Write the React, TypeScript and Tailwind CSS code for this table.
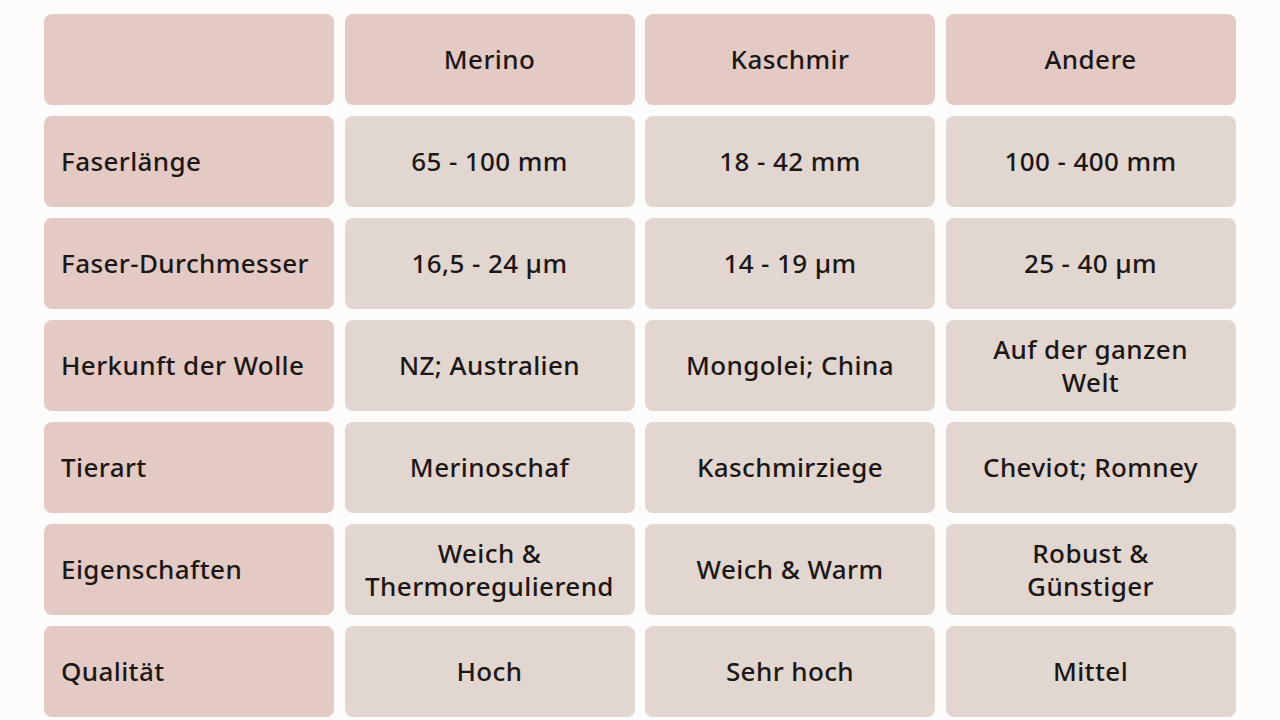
import React from "react";

const header = ["Merino", "Kaschmir", "Andere"];
const rows: { label: string; cells: string[][] }[] = [
  { label: "Faserlänge", cells: [["65 - 100 mm"], ["18 - 42 mm"], ["100 - 400 mm"]] },
  { label: "Faser-Durchmesser", cells: [["16,5 - 24 µm"], ["14 - 19 µm"], ["25 - 40 µm"]] },
  { label: "Herkunft der Wolle", cells: [["NZ; Australien"], ["Mongolei; China"], ["Auf der ganzen", "Welt"]] },
  { label: "Tierart", cells: [["Merinoschaf"], ["Kaschmirziege"], ["Cheviot; Romney"]] },
  { label: "Eigenschaften", cells: [["Weich &", "Thermoregulierend"], ["Weich & Warm"], ["Robust &", "Günstiger"]] },
  { label: "Qualität", cells: [["Hoch"], ["Sehr hoch"], ["Mittel"]] },
];

export default function App() {
  return (
    <div
      className="w-[1280px] h-[720px] bg-[#fdfcfb] px-[44px] pt-[14px] text-[#1c1715] overflow-hidden"
      style={{ fontFamily: '"Noto Sans", "Open Sans", sans-serif' }}
    >
      <div className="grid grid-cols-[290px_290px_290px_290px] auto-rows-[91px] gap-y-[11px] gap-x-[10.5px]">
        <div className="rounded-lg bg-[#e4cac4]" />
        {header.map((h) => (
          <div key={h} className="rounded-lg bg-[#e4cac4] flex items-center justify-center text-[26px] tracking-[0.4px] font-medium">
            {h}
          </div>
        ))}
        {rows.map((r) => (
          <React.Fragment key={r.label}>
            <div className="rounded-lg bg-[#e4cac4] flex items-center pl-[17px] text-[26px] tracking-[0.4px] font-medium">
              {r.label}
            </div>
            {r.cells.map((c, i) => (
              <div
                key={i}
                className="rounded-lg bg-[#e1d6d0] flex flex-col items-center justify-center text-center text-[26px] tracking-[0.4px] font-medium leading-[33px]"
              >
                {c.map((line) => (
                  <span key={line}>{line}</span>
                ))}
              </div>
            ))}
          </React.Fragment>
        ))}
      </div>
    </div>
  );
}
